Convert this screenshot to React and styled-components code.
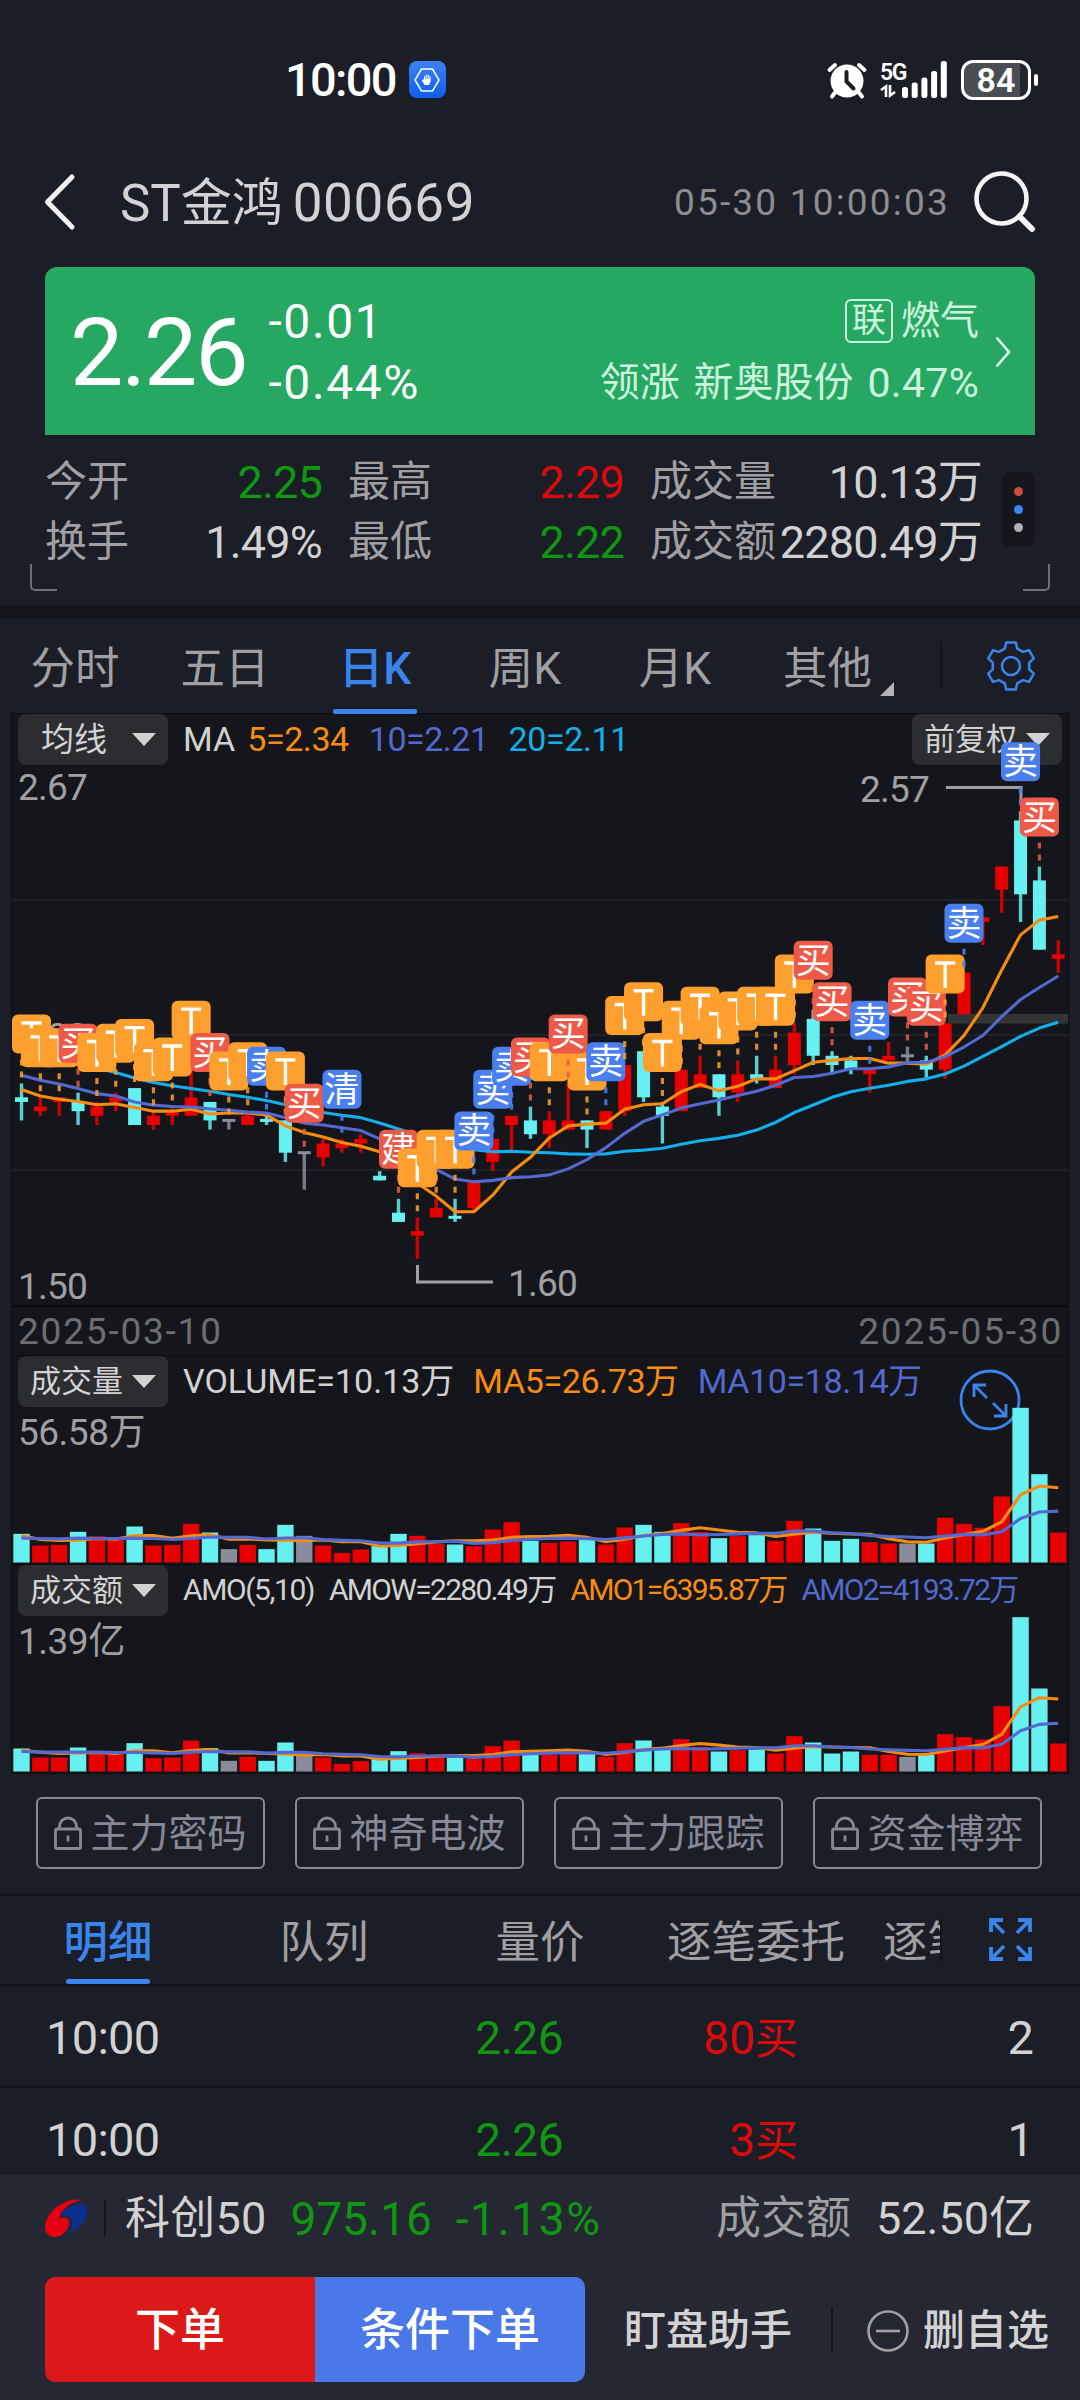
import React from "react";
import styled, { createGlobalStyle, css } from "styled-components";

const colors = {
  page: "#1b1e27",
  panel: "#15161b",
  line: "#14151b",
  text: "#d2d2d2",
  label: "#a0a0a2",
  faint: "#6d6e71",
  muted: "#858896",
  blue: "#3a84ec",
  green: "#109712",
  red: "#dc0a0b",
  up: "#e60000",
  down: "#66f0f0",
  flat: "#8a8c9b",
  ma5: "#f88c12",
  ma10: "#5269cf",
  ma20: "#14aeea",
};

const GlobalStyle = createGlobalStyle`
  * {
    box-sizing: border-box;
  }
  body {
    margin: 0;
    background: ${colors.page};
    font-family: Roboto, "Noto Sans CJK SC", sans-serif;
    color: ${colors.text};
  }
  svg {
    display: block;
    flex: none;
    overflow: visible;
  }
`;

const Screen = styled.div`
  width: 1080px;
  height: 2400px;
  display: flex;
  flex-direction: column;
  overflow: hidden;
  background: ${colors.page};
`;

const Text = styled.span`
  font-size: ${(p) => p.$size || 42}px;
  letter-spacing: ${(p) => p.$ls || 0}px;
  word-spacing: ${(p) => p.$ws || 0}px;
  color: ${(p) => p.$color || "inherit"};
  font-weight: ${(p) => p.$weight || 400};
  line-height: 1;
  white-space: pre;
`;

/* ---------- status bar ---------- */

const StatusBar = styled.div`
  height: 136px;
  padding: 23px 42px 0 285px;
  display: flex;
  align-items: center;
`;

const AppBadge = styled.div`
  width: 37px;
  height: 37px;
  margin-left: 13px;
  border-radius: 8px;
  background: linear-gradient(#3f80f5, #0f5ef0);
  display: flex;
  align-items: center;
  justify-content: center;
`;

const StatusRight = styled.div`
  margin-left: auto;
  display: flex;
  align-items: center;
`;

const Network = styled.div`
  display: flex;
  flex-direction: column;
  gap: 1px;
  width: 22px;
  height: 38px;
  margin-left: 13px;
`;

const Battery = styled.div`
  width: 70px;
  height: 40px;
  margin-left: 17px;
  border: 3px solid #fff;
  border-radius: 12px;
  background: linear-gradient(to right, #4a4d54 88%, #24272f 88%);
  display: flex;
  align-items: center;
  justify-content: center;
`;

const BatteryTip = styled.div`
  width: 4px;
  height: 12px;
  margin-left: 3px;
  border-radius: 2px;
  background: #fff;
`;

/* ---------- title bar ---------- */

const TitleBar = styled.div`
  height: 131px;
  padding: 0 45px 0 44px;
  display: flex;
  align-items: center;
`;

const StockTitle = styled.div`
  display: flex;
  align-items: center;
  gap: 10px;
  margin-left: 44px;
  padding-top: 3px;
`;

const TitleTime = styled.div`
  margin-left: auto;
  margin-right: 24px;
  padding-top: 2px;
  display: flex;
`;

/* ---------- quote card ---------- */

const QuoteCard = styled.div`
  height: 168px;
  margin: 0 45px;
  padding: 2px 24px 0 25px;
  border-radius: 12px 12px 0 0;
  background: #26a862;
  color: #fff;
  display: flex;
  align-items: center;
`;

const Change = styled.div`
  display: flex;
  flex-direction: column;
  gap: 13px;
  margin-left: 22px;
`;

const Industry = styled.div`
  margin-left: auto;
  margin-right: 16px;
  display: flex;
  flex-direction: column;
  align-items: flex-end;
  gap: 20px;
  color: #cdf5de;
`;

const IndustryRow = styled.div`
  display: flex;
  align-items: center;
  height: 42px;
`;

const LinkTag = styled.span`
  width: 48px;
  height: 44px;
  margin-right: 8px;
  border: 2px solid #cdf5de;
  border-radius: 6px;
  font-size: 34px;
  line-height: 39px;
  text-align: center;
`;

/* ---------- stats ---------- */

const Stats = styled.div`
  height: 171px;
  margin: 0 44px 0 45px;
  padding-top: 17px;
  display: flex;
`;

const StatGrid = styled.div`
  display: grid;
  grid-template-columns: 277px 276px 332px;
  grid-auto-rows: 60px;
  column-gap: 26px;
`;

const Stat = styled.div`
  display: flex;
  align-items: center;
  justify-content: space-between;
`;

const MoreDots = styled.div`
  width: 33px;
  height: 75px;
  margin: 20px 0 0 20px;
  border-radius: 8px;
  background: ${colors.panel};
  display: flex;
  flex-direction: column;
  align-items: center;
  justify-content: center;
  gap: 9px;
`;

const Dot = styled.i`
  width: 9px;
  height: 9px;
  border-radius: 50%;
  background: ${(p) => p.$color};
`;

const Corners = styled.div`
  height: 0;
  padding: 0 30px;
  display: flex;
  justify-content: space-between;
  align-items: flex-end;
`;

const Corner = styled.div`
  width: 27px;
  height: 27px;
  margin-bottom: 15px;
  border: solid #6f7073;
  border-width: ${(p) => (p.$right ? "0 2.5px 2.5px 0" : "0 0 2.5px 2.5px")};
  border-radius: ${(p) => (p.$right ? "0 0 5px 0" : "0 0 0 5px")};
`;

const Strip = styled.div`
  height: 12px;
  background: ${colors.line};
`;

/* ---------- tabs ---------- */

const activeTab = css`
  color: ${colors.blue};
  font-weight: 500;
  &:after {
    content: "";
    position: absolute;
    bottom: 0;
    width: 84px;
    height: 5px;
    border-radius: 2px;
    background: ${colors.blue};
  }
`;

const PeriodTabs = styled.div`
  height: 96px;
  display: flex;
  align-items: center;
  padding-right: 44px;
`;

const PeriodTab = styled.div`
  width: ${(p) => p.$width || 150}px;
  height: 100%;
  padding-bottom: 4px;
  display: flex;
  align-items: center;
  justify-content: center;
  position: relative;
  color: ${colors.label};
  font-size: 44.5px;
  ${(p) => p.$active && activeTab}
`;

const MoreCorner = styled.i`
  width: 0;
  height: 0;
  align-self: flex-end;
  margin: 0 0 14px 8px;
  border-left: 14px solid transparent;
  border-bottom: 14px solid #b4b4b4;
`;

const Separator = styled.i`
  width: 2px;
  height: ${(p) => p.$height}px;
  margin: ${(p) => p.$margin || "0"};
  background: ${colors.line};
`;

const GearIcon = styled.svg`
  margin-left: auto;
`;

/* ---------- charts ---------- */

const ChartPanel = styled.div`
  width: 1056px;
  height: 1059px;
  margin-left: 12px;
  background: ${colors.panel};
  box-shadow: 0 0 0 1px #0d0e11;
`;

const ChartHead = styled.div`
  height: ${(p) => p.$height}px;
  display: flex;
  padding: 0 6px;
  border-top: ${(p) => (p.$rule ? "1px solid #0a0b0d" : "0")};
`;

const Picker = styled.div`
  width: 150px;
  height: 51px;
  padding: 0 12px 0 ${(p) => (p.$spread ? 23 : 12)}px;
  border-radius: 8px;
  background: #2c2d31;
  display: flex;
  align-items: center;
  justify-content: space-between;
`;

const Caret = styled.i`
  border: solid transparent;
  border-width: 13px 12px 0;
  border-top-color: ${colors.text};
`;

const Legend = styled.div`
  flex: 1;
  display: flex;
  align-items: center;
  padding: 0 0 2px 15px;
  gap: ${(p) => p.$gap}px;
`;

const LegendGroup = styled.div`
  display: flex;
  gap: 12px;
`;

const DateRow = styled.div`
  height: 50px;
  padding: 0 5px 0 6px;
  border-top: 2px solid #0a0b0d;
  display: flex;
  align-items: center;
  justify-content: space-between;
`;

const ChartCanvas = styled.svg`
  position: relative;
`;

/* Candles are in price ticks above 1.50: [direction, high, open/close top, open/close bottom, low] */
const candles = [
  ["d", 48, 45, 44, 40],
  ["u", 45, 43, 42, 41],
  ["u", 45, 45, 44, 41],
  ["d", 46, 44, 42, 39],
  ["u", 44, 43, 41, 39],
  ["u", 46, 45, 44, 42],
  ["d", 47, 47, 39, 39],
  ["u", 42, 41, 39, 38],
  ["u", 43, 42, 41, 39],
  ["u", 51, 45, 41, 41],
  ["d", 44, 44, 40, 38],
  ["f", 40, 40, 40, 38],
  ["u", 42, 41, 39, 39],
  ["d", 41, 40, 40, 39],
  ["d", 40, 40, 33, 31],
  ["f", 33, 33, 33, 25],
  ["u", 36, 35, 32, 30],
  ["u", 36, 35, 34, 33],
  ["u", 37, 36, 35, 33],
  ["d", 29, 28, 27, 27],
  ["d", 23, 20, 18, 18],
  ["u", 19, 16, 15, 10],
  ["u", 23, 21, 19, 19],
  ["d", 23, 19, 19, 18],
  ["u", 27, 27, 21, 20],
  ["u", 36, 36, 31, 29],
  ["u", 41, 41, 39, 33],
  ["d", 43, 40, 37, 36],
  ["u", 42, 40, 37, 34],
  ["u", 48, 40, 38, 38],
  ["d", 40, 40, 38, 34],
  ["u", 42, 42, 38, 38],
  ["u", 52, 52, 42, 41],
  ["d", 55, 55, 45, 44],
  ["d", 44, 43, 41, 35],
  ["u", 51, 51, 42, 42],
  ["u", 54, 50, 47, 47],
  ["d", 50, 50, 45, 41],
  ["u", 53, 50, 46, 44],
  ["d", 54, 50, 49, 48],
  ["u", 54, 51, 47, 47],
  ["u", 61, 59, 52, 50],
  ["d", 64, 62, 54, 52],
  ["d", 55, 54, 52, 50],
  ["d", 54, 53, 51, 50],
  ["u", 51, 51, 50, 46],
  ["u", 57, 54, 53, 53],
  ["f", 56, 54, 54, 52],
  ["d", 54, 53, 51, 49],
  ["u", 61, 61, 51, 49],
  ["u", 72, 72, 63, 63],
  ["u", 84, 84, 83, 78],
  ["u", 95, 95, 90, 85],
  ["d", 107, 105, 89, 83],
  ["d", 95, 92, 77, 77],
  ["u", 79, 76, 75, 72],
];

const signals = [
  [0, "T"], [1, "T"], [2, "T"], [3, "买"], [4, "T"], [5, "T"], [6, "T"], [7, "T"],
  [8, "T"], [9, "T"], [10, "买"], [11, "T"], [12, "T"], [13, "卖"], [14, "T"], [15, "买"],
  [17, "清"], [20, "建"], [21, "T"], [22, "T"], [23, "T"], [24, "卖"], [25, "卖"], [26, "卖"],
  [27, "买"], [28, "T"], [30, "T"], [29, "买"], [31, "卖"], [32, "T"], [33, "T"], [35, "T"],
  [34, "T"], [36, "T"], [37, "T"], [38, "T"], [39, "T"], [40, "T"], [41, "T"], [42, "买"],
  [43, "买"], [45, "卖"], [47, "买"], [48, "买"], [49, "T"], [50, "卖"], [53, "卖"], [54, "买"],
];

const signalColors = {
  T: "#ff9f2e",
  买: "#ee5a47",
  建: "#ee5a47",
  卖: "#4a7ff0",
  清: "#4a7ff0",
};

const volumes = [
  86, 51, 53, 92, 79, 73, 108, 51, 53, 116, 90, 40, 53, 40, 113, 80, 51, 29, 39, 49, 86, 80, 56,
  54, 49, 99, 121, 65, 59, 63, 69, 54, 105, 113, 92, 118, 92, 73, 79, 82, 65, 125, 102, 65, 71, 61,
  57, 57, 57, 134, 116, 104, 198, 464, 265, 90,
];

const amounts = [
  69, 42, 42, 72, 59, 54, 85, 40, 42, 93, 70, 32, 44, 32, 87, 49, 42, 23, 31, 39, 61, 55, 44, 42,
  39, 76, 93, 52, 50, 52, 56, 44, 85, 93, 72, 97, 74, 60, 64, 66, 54, 106, 87, 54, 60, 50, 50, 44,
  50, 112, 103, 96, 196, 463, 249, 84,
];

const TICK = 4.615;
const STEP = 18.85;
const barX = (i) => 9.5 + i * STEP;
const priceY = (t) => 540 - t * TICK;

const average = (values, period, seed) =>
  values.map((_, i) =>
    i < seed.length
      ? seed[i]
      : values.slice(i - period + 1, i + 1).reduce((a, b) => a + b, 0) / period
  );

const toPoints = (values, y) => values.map((v, i) => `${barX(i)},${y(v)}`).join(" ");

const closes = candles.map(([dir, , top, bottom]) => (dir === "d" ? bottom : top));
const ma5 = average(closes, 5, [46.7, 45.3, 44.6, 44.1]);
const ma10 = average(closes, 10, [49.8, 48.7, 47.9, 46.9, 45.8, 45.3, 44, 43.3, 43]);
const ma20 = average(closes, 20, [
  56, 54.5, 53.3, 52.2, 51.3, 50.4, 49.2, 48.2, 47.5, 46.9, 46.3, 45.6, 45, 44.3, 43.4, 42.6, 41.7,
  41.1, 40.6,
]);

const directionColor = { u: colors.up, d: colors.down, f: colors.flat };

const Candle = ({ index, data }) => {
  const [dir, high, top, bottom, low] = data;
  const x = barX(index);
  const fill = directionColor[dir];
  const flat = top === bottom;
  return (
    <g fill={fill}>
      <rect x={x - 1.7} y={priceY(high)} width="3.4" height={(high - low) * TICK} opacity="0.85" />
      <rect
        x={x - 6.5}
        y={priceY(top) - (flat ? 1.5 : 0)}
        width="13"
        height={flat ? 3 : (top - bottom) * TICK}
      />
    </g>
  );
};

const Signal = ({ index, kind }) => {
  const x = barX(index);
  const high = priceY(candles[index][1]);
  const left = Math.max(x - 19.5, 0);
  const fill = signalColors[kind];
  const top = high - 69;
  return (
    <g>
      <line
        x1={x}
        x2={x}
        y1={high - 24}
        y2={high}
        stroke={fill}
        strokeWidth="3.2"
        strokeDasharray="6 6"
        opacity="0.85"
      />
      <rect x={left} y={top} width="39" height="39" rx="6" fill={fill} />
      {kind === "T" ? (
        <path
          d={`M${left + 9.5} ${top + 8.5}h20M${left + 19.5} ${top + 8.5}v25`}
          stroke="#fff"
          strokeWidth="3.4"
        />
      ) : (
        <text x={left + 19.5} y={top + 32} fontSize="35" textAnchor="middle" fill="#fff">
          {kind}
        </text>
      )}
    </g>
  );
};

const PriceChart = () => (
  <ChartCanvas width="1056" height="540">
    <g stroke="#202126" strokeWidth="2">
      <path d="M0 135H1056M0 270H1056M0 405H1056" />
    </g>
    <g fontSize="37" letterSpacing="-0.8" fill={colors.label}>
      <text x="6" y="35">2.67</text>
      <text x="6" y="284">2.08</text>
      <text x="6" y="534">1.50</text>
      <text x="848" y="37">2.57</text>
      <text x="496" y="531">1.60</text>
    </g>
    <rect x="936" y="249" width="120" height="9.5" fill="#333435" />
    <path d="M934 22.5H1009V38M405.5 500V517H481" fill="none" stroke="#a0a0a2" strokeWidth="3" />
    {candles.map((data, i) => (
      <Candle key={i} index={i} data={data} />
    ))}
    <g fill="none" strokeWidth="3.1" strokeLinejoin="round">
      <polyline points={toPoints(ma20, priceY)} stroke={colors.ma20} />
      <polyline points={toPoints(ma5, priceY)} stroke={colors.ma5} />
      <polyline points={toPoints(ma10, priceY)} stroke={colors.ma10} />
    </g>
    {signals.map(([index, kind]) => (
      <Signal key={index} index={index} kind={kind} />
    ))}
  </ChartCanvas>
);

const BarChart = ({ values, label, seed5, seed10, children }) => {
  const y = (v) => 155.5 - v / 3;
  return (
    <ChartCanvas width="1056" height="157">
      <text x="6" y="38" fontSize="37" letterSpacing="-0.5" fill={colors.label}>
        {label}
      </text>
      {children}
      {values.map((v, i) => (
        <rect
          key={i}
          x={barX(i) - 8.2}
          y={y(v)}
          width="16.4"
          height={v / 3}
          fill={directionColor[candles[i][0]]}
        />
      ))}
      <g fill="none" strokeWidth="3.1" strokeLinejoin="round">
        <polyline points={toPoints(average(values, 5, seed5), y)} stroke={colors.ma5} />
        <polyline points={toPoints(average(values, 10, seed10), y)} stroke={colors.ma10} />
      </g>
    </ChartCanvas>
  );
};

/* ---------- locked features ---------- */

const LockedRow = styled.div`
  height: 121px;
  padding: 24px 38px 0 36px;
  display: flex;
  justify-content: space-between;
`;

const LockedButton = styled.div`
  width: 229px;
  height: 72px;
  padding-top: 2px;
  border: 2px solid ${colors.muted};
  border-radius: 6px;
  color: ${colors.muted};
  display: flex;
  align-items: center;
  justify-content: center;
  gap: 8px;
`;

const LockIcon = () => (
  <svg width="28" height="34" viewBox="0 0 28 34" fill="none" stroke={colors.muted} strokeWidth="2.8">
    <rect x="1.5" y="12" width="25" height="19.5" rx="1.5" />
    <path d="M5.5 12V9.5a8.5 8.5 0 0 1 17 0V12M14 18.5v6" />
  </svg>
);

/* ---------- detail list ---------- */

const DetailTabs = styled.div`
  height: 92px;
  border-top: 2px solid ${colors.line};
  border-bottom: 2px solid ${colors.line};
  display: flex;
  align-items: center;
`;

const TabScroller = styled.div`
  width: 940px;
  height: 100%;
  display: flex;
  overflow: hidden;
`;

const DetailTab = styled.div`
  flex: 0 0 216px;
  padding-bottom: 4px;
  display: flex;
  align-items: center;
  justify-content: center;
  font-size: 44.5px;
  position: relative;
  white-space: nowrap;
  color: ${colors.label};
  ${(p) => p.$active && activeTab}
`;

const ExpandIcon = styled.svg`
  margin: 0 0 2px 47px;
`;

const Trades = styled.div`
  flex: 1;
  min-height: 0;
  overflow: hidden;
`;

const TradeRow = styled.div`
  height: 102px;
  padding: 3px 46px 0;
  border-bottom: 2px solid ${colors.line};
  display: grid;
  grid-template-columns: 300px 217px 235px 1fr;
  align-items: center;
  text-align: right;
  & > :first-child {
    text-align: left;
  }
`;

/* ---------- bottom bar ---------- */

const BottomBar = styled.div`
  height: 225px;
  padding: 0 31px 0 45px;
  background: #252733;
`;

const IndexRow = styled.div`
  height: 102px;
  padding: 0 15px 15px 0;
  display: flex;
  align-items: center;
`;

const IndexQuote = styled.div`
  flex: 1;
  display: flex;
  gap: 24px;
`;

const IndexTurnover = styled.div`
  display: flex;
  gap: 25px;
`;

const ActionRow = styled.div`
  height: 105px;
  display: flex;
  align-items: center;
`;

const TradeButtons = styled.div`
  width: 540px;
  height: 105px;
  border-radius: 10px;
  overflow: hidden;
  display: flex;
`;

const TradeButton = styled.div`
  flex: 1;
  background: ${(p) => p.$color};
  color: #fff;
  font-size: 45px;
  font-weight: 500;
  line-height: 107px;
  text-align: center;
`;

const TextAction = styled.div`
  display: flex;
  align-items: center;
  gap: 14px;
  padding-top: 2px;
  font-size: 42px;
  font-weight: 500;
  line-height: 1;
  &:nth-child(2) {
    margin: 0 auto 0 39px;
  }
`;

const periods = ["分时", "五日", "日K", "周K", "月K"];
const locked = ["主力密码", "神奇电波", "主力跟踪", "资金博弈"];
const detailTabs = ["明细", "队列", "量价", "逐笔委托", "逐笔成交"];

const stats = [
  ["今开", "2.25", colors.green],
  ["最高", "2.29", colors.red],
  ["成交量", "10.13万"],
  ["换手", "1.49%"],
  ["最低", "2.22", colors.green],
  ["成交额", "2280.49万"],
];

const trades = [
  ["10:00", "2.26", "80", "2"],
  ["10:00", "2.26", "3", "1"],
];

/* six teeth with sloped flanks */
const gearPath = () => {
  const points = [];
  for (let i = 0; i < 6; i++) {
    const a = (i * Math.PI) / 3;
    [[-0.34, 18.5], [-0.2, 24], [0.2, 24], [0.34, 18.5]].forEach(([d, r]) => {
      points.push(`${(25 + r * Math.sin(a + d)).toFixed(1)} ${(25 - r * Math.cos(a + d)).toFixed(1)}`);
    });
  }
  return `M${points.join("L")}Z`;
};

const App = () => (
  <>
    <GlobalStyle />
    <Screen>
      <StatusBar>
        <Text $size={47} $weight={500} $color="#fff" $ls={-1.7}>
          10:00
        </Text>
        <AppBadge>
          <svg width="26" height="26" viewBox="0 0 26 26">
            <path d="M7.5 2h11L25 13l-6.5 11h-11L1 13z" fill="none" stroke="#fff" strokeWidth="1.5" />
            <path
              d="M10.5 14V9.500M12.300 13V8M14.200 13V8M16 13V9.500M8.500 13.500l2.500 4h3.500l1.500-3V12.500h-5.500z"
              fill="#fff"
              stroke="#fff"
              strokeWidth="1.1"
              strokeLinecap="round"
            />
          </svg>
        </AppBadge>
        <StatusRight>
          <svg width="40" height="38" viewBox="0 0 40 38">
            <circle cx="20" cy="20" r="16.5" fill="#fff" />
            <path
              d="M2.5 9L8 4M37.5 9L32 4M8.5 31L5 35.5M31.5 31L35 35.5"
              stroke="#fff"
              strokeWidth="4"
              strokeLinecap="round"
            />
            <path
              d="M19.5 11v9.5l7 7"
              fill="none"
              stroke={colors.page}
              strokeWidth="4"
              strokeLinecap="round"
              strokeLinejoin="round"
            />
          </svg>
          <Network>
            <Text $size={23} $weight={600} $color="#fff" $ls={-1.5}>
              5G
            </Text>
            <svg width="18" height="12" viewBox="0 0 18 12" fill="none" stroke="#fff" strokeWidth="2.6">
              <path d="M1 5L6 1.5V12M10 0v10.5L15 7" />
            </svg>
          </Network>
          <svg width="42" height="37" viewBox="0 0 42 37" fill="#fff">
            <rect x="0" y="26" width="6" height="11" rx="2.5" />
            <rect x="9.7" y="21.5" width="6" height="15.5" rx="2.5" />
            <rect x="19.4" y="16.5" width="6" height="20.5" rx="2.5" />
            <rect x="29.1" y="10" width="6" height="27" rx="2.5" />
            <rect x="38.8" y="0" width="6" height="37" rx="2.5" />
          </svg>
          <Battery>
            <Text $size={34} $weight={600} $color="#fff">
              84
            </Text>
          </Battery>
          <BatteryTip />
        </StatusRight>
      </StatusBar>

      <TitleBar>
        <svg width="32" height="56" viewBox="0 0 32 56" fill="none">
          <path
            d="M28 3L3.5 28L28 53"
            stroke="#f0f0f0"
            strokeWidth="5"
            strokeLinecap="round"
            strokeLinejoin="round"
          />
        </svg>
        <StockTitle>
          <Text $size={51}>ST金鸿</Text>
          <Text $size={53} $ls={0.6}>
            000669
          </Text>
        </StockTitle>
        <TitleTime>
          <Text $size={37} $ls={2.2} $color="#8d8e91">
            05-30 10:00:03
          </Text>
        </TitleTime>
        <svg width="61" height="61" viewBox="0 0 61 61" fill="none" stroke="#f4f4f4" strokeLinecap="round">
          <circle cx="27.5" cy="27.5" r="25" strokeWidth="4.6" />
          <path d="M45.5 45.5L58 58" strokeWidth="6" />
        </svg>
      </TitleBar>

      <QuoteCard>
        <Text $size={95} $ls={-2.2}>
          2.26
        </Text>
        <Change>
          <Text $size={48} $ls={1.6}>
            -0.01
          </Text>
          <Text $size={48} $ls={1.6}>
            -0.44%
          </Text>
        </Change>
        <Industry>
          <IndustryRow>
            <LinkTag>联</LinkTag>
            <Text $size={39}>燃气</Text>
          </IndustryRow>
          <IndustryRow>
            <Text $size={40} $ws={4}>
              {"领涨 新奥股份 "}
            </Text>
            <Text $size={41} $ls={0.3}>
              0.47%
            </Text>
          </IndustryRow>
        </Industry>
        <svg width="16" height="32" viewBox="0 0 16 32" fill="none">
          <path d="M1.5 1.5L14 16L1.5 30.5" stroke="#e6fff0" strokeWidth="2.5" />
        </svg>
      </QuoteCard>

      <Stats>
        <StatGrid>
          {stats.map(([label, value, color]) => (
            <Stat key={label}>
              <Text $size={42} $color={colors.label}>
                {label}
              </Text>
              <Text $size={45} $ls={-0.8} $color={color || colors.text}>
                {value}
              </Text>
            </Stat>
          ))}
        </StatGrid>
        <MoreDots>
          <Dot $color="#d14b3a" />
          <Dot $color="#3f85f0" />
          <Dot $color="#b0b0b0" />
        </MoreDots>
      </Stats>
      <Corners>
        <Corner />
        <Corner $right />
      </Corners>
      <Strip />

      <PeriodTabs>
        {periods.map((name) => (
          <PeriodTab key={name} $active={name === "日K"}>
            {name}
          </PeriodTab>
        ))}
        <PeriodTab $width={177}>
          其他
          <MoreCorner />
        </PeriodTab>
        <Separator $height={46} $margin="0 0 0 13px" />
        <GearIcon
          width="50"
          height="50"
          viewBox="0 0 50 50"
          fill="none"
          stroke={colors.blue}
          strokeWidth="2.5"
          strokeLinejoin="round"
        >
          <path d={gearPath()} />
          <circle cx="25" cy="25" r="9" />
        </GearIcon>
      </PeriodTabs>

      <ChartPanel>
        <ChartHead $height={51}>
          <Picker $spread>
            <Text $size={33}>均线</Text>
            <Caret />
          </Picker>
          <Legend $gap={20}>
            <LegendGroup>
              <Text $size={34}>MA</Text>
              <Text $size={34} $ls={-0.4} $color={colors.ma5}>
                5=2.34
              </Text>
            </LegendGroup>
            <Text $size={34} $ls={-0.5} $color={colors.ma10}>
              10=2.21
            </Text>
            <Text $size={34} $ls={-0.4} $color={colors.ma20}>
              20=2.11
            </Text>
          </Legend>
          <Picker>
            <Text $size={31}>前复权</Text>
            <Caret />
          </Picker>
        </ChartHead>
        <PriceChart />
        <DateRow>
          <Text $size={37} $ls={1.8} $color={colors.faint}>
            2025-03-10
          </Text>
          <Text $size={37} $ls={1.8} $color={colors.faint}>
            2025-05-30
          </Text>
        </DateRow>
        <ChartHead $height={52} $rule>
          <Picker>
            <Text $size={31}>成交量</Text>
            <Caret />
          </Picker>
          <Legend $gap={19}>
            <Text $size={34}>VOLUME=10.13万</Text>
            <Text $size={34} $ls={-0.4} $color={colors.ma5}>
              MA5=26.73万
            </Text>
            <Text $size={34} $ls={-0.4} $color={colors.ma10}>
              MA10=18.14万
            </Text>
          </Legend>
        </ChartHead>
        <BarChart
          values={volumes}
          label="56.58万"
          seed5={[81, 69, 66, 67]}
          seed10={[73, 72, 71, 73, 72, 72, 73, 72, 69, 72]}
        >
          <g fill="none" stroke={colors.blue} strokeWidth="2.8">
            <circle cx="978" cy="-7" r="29" />
            <path d="M962 -10V-22H974M962 -22L975 -9M981 -4L994 9M982 9H994V-3" />
          </g>
        </BarChart>
        <ChartHead $height={52} $rule>
          <Picker>
            <Text $size={31}>成交额</Text>
            <Caret />
          </Picker>
          <Legend $gap={15}>
            <Text $size={30} $ls={-1.4}>
              AMO(5,10)
            </Text>
            <Text $size={30} $ls={-1.7}>
              AMOW=2280.49万
            </Text>
            <Text $size={30} $ls={-1.75} $color={colors.ma5}>
              AMO1=6395.87万
            </Text>
            <Text $size={30} $ls={-1.75} $color={colors.ma10}>
              AMO2=4193.72万
            </Text>
          </Legend>
        </ChartHead>
        <BarChart
          values={amounts}
          label="1.39亿"
          seed5={[64, 58, 54, 56]}
          seed10={[60, 58, 58, 58, 58, 57, 57, 56, 54, 58]}
        />
      </ChartPanel>

      <LockedRow>
        {locked.map((name) => (
          <LockedButton key={name}>
            <LockIcon />
            <Text $size={39}>{name}</Text>
          </LockedButton>
        ))}
      </LockedRow>

      <DetailTabs>
        <TabScroller>
          {detailTabs.map((name, i) => (
            <DetailTab key={name} $active={i === 0}>
              {name}
            </DetailTab>
          ))}
        </TabScroller>
        <Separator $height={46} />
        <ExpandIcon
          width="43"
          height="43"
          viewBox="0 0 43 43"
          fill="none"
          stroke={colors.blue}
          strokeWidth="3.8"
        >
          <path d="M2 14V2H14M2 2L15 15M29 2H41V14M41 2L28 15M2 29V41H14M2 41L15 28M41 29V41H29M41 41L28 28" />
        </ExpandIcon>
      </DetailTabs>

      <Trades>
        {trades.map(([time, price, amount, count], i) => (
          <TradeRow key={i}>
            <Text $size={47} $ls={-0.7}>
              {time}
            </Text>
            <Text $size={46} $ls={-0.5} $color={colors.green}>
              {price}
            </Text>
            <Text $size={46} $color={colors.red}>
              {amount}
              <Text $size={43}>买</Text>
            </Text>
            <Text $size={47}>{count}</Text>
          </TradeRow>
        ))}
      </Trades>

      <BottomBar>
        <IndexRow>
          <svg width="42" height="40" viewBox="0 0 42 40">
            <path d="M37 1C20-2 2 12 0 27c-1 9 8 13 15 10 8-4 11-12 8-17-3-3-7-1-9 0C16 11 25 3 37 1z" fill="#e60012" />
            <path d="M36 5c-9 0-18 5-20 12 6-2 11 1 11 7 0 5-3 9-6 11C33 32 42 22 42 12c0-4-2-7-6-7z" fill="#0a2f8f" />
          </svg>
          <Separator $height={37} $margin="0 19px 0 17px" />
          <IndexQuote>
            <Text $size={45} $ls={0.2}>
              科创50
            </Text>
            <Text $size={46} $color={colors.green}>
              975.16
            </Text>
            <Text $size={46} $ls={1.6} $color={colors.green}>
              -1.13%
            </Text>
          </IndexQuote>
          <IndexTurnover>
            <Text $size={45} $color={colors.label}>
              成交额
            </Text>
            <Text $size={45}>52.50亿</Text>
          </IndexTurnover>
        </IndexRow>
        <ActionRow>
          <TradeButtons>
            <TradeButton $color="#dc1919">下单</TradeButton>
            <TradeButton $color="#4a78e8">条件下单</TradeButton>
          </TradeButtons>
          <TextAction>盯盘助手</TextAction>
          <Separator $height={43} $margin="0 34px 0 0" />
          <TextAction>
            <svg width="42" height="42" viewBox="0 0 42 42" fill="none" stroke={colors.label} strokeWidth="2.6">
              <circle cx="21" cy="21" r="19.5" />
              <path d="M9 21H33" />
            </svg>
            删自选
          </TextAction>
        </ActionRow>
      </BottomBar>
    </Screen>
  </>
);

export default App;
